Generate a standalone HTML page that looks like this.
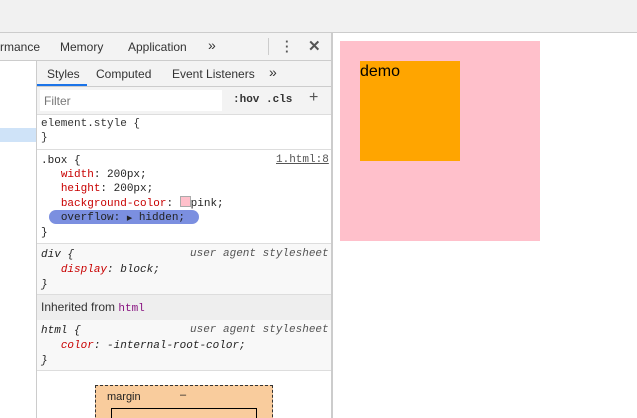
<!DOCTYPE html><html><head><style>
html,body{margin:0;width:637px;height:418px;overflow:hidden}
body{background:#fff;font-family:"Liberation Sans",sans-serif;font-size:12px;position:relative}
.a{position:absolute}
.m{font-family:"Liberation Mono",monospace;font-size:11px}
.ui{font-size:12px;color:#333}
</style></head><body>
<div class="a" style="left:0;top:0;width:637px;height:32px;background:#f1f1f1;border-bottom:1px solid #ccc"></div>
<div class="a" style="left:0;top:33px;width:331px;height:27px;background:#f3f3f3;border-bottom:1px solid #ccc"></div>
<div class="a ui" style="left:0;top:40px">rmance</div>
<div class="a ui" style="left:60px;top:40px">Memory</div>
<div class="a ui" style="left:128px;top:40px">Application</div>
<div class="a ui" style="left:208px;top:37px;font-size:14px">»</div>
<div class="a" style="left:268px;top:38px;width:1px;height:17px;background:#ccc"></div>
<div class="a" style="left:285px;top:39px;font-weight:bold;font-size:13px;color:#555;line-height:5px">·<br>·<br>·</div>
<div class="a" style="left:308px;top:37px;font-size:15px;color:#555;font-weight:bold">✕</div>
<div class="a" style="left:331px;top:33px;width:2px;height:385px;background:#ccc"></div>
<div class="a" style="left:0;top:128px;width:36px;height:14px;background:#cfe3f8"></div>
<div class="a" style="left:36px;top:60px;width:1px;height:358px;background:#ccc"></div>
<div class="a" style="left:37px;top:61px;width:294px;height:25px;background:#f3f3f3;border-bottom:1px solid #ccc"></div>
<div class="a ui" style="left:47px;top:67px">Styles</div>
<div class="a" style="left:37px;top:84px;width:50px;height:2px;background:#1a73e8"></div>
<div class="a ui" style="left:96px;top:67px">Computed</div>
<div class="a ui" style="left:172px;top:67px">Event Listeners</div>
<div class="a ui" style="left:269px;top:64px;font-size:14px">»</div>
<div class="a" style="left:37px;top:87px;width:294px;height:27px;background:#f3f3f3;border-bottom:1px solid #ddd"></div>
<div class="a" style="left:40px;top:90px;width:182px;height:21px;background:#fff"></div>
<div class="a ui" style="left:44px;top:94px;color:#777">Filter</div>
<div class="a m" style="left:233px;top:94px;font-weight:bold;color:#333">:hov .cls</div>
<div class="a" style="left:309px;top:89px;font-size:16px;color:#555">+</div>
<div class="a m" style="left:41px;top:117px;color:#333;line-height:14px">element.style {<br>}</div>
<div class="a" style="left:37px;top:149px;width:294px;height:1px;background:#ddd"></div>
<div class="a" style="left:49px;top:210px;width:150px;height:14px;background:#7b8fe0;border-radius:7px"></div>
<div class="a m" style="left:41px;top:154px;color:#222;line-height:14px;white-space:pre">.box {
   <span style="color:#c80000">width</span>: 200px;
   <span style="color:#c80000">height</span>: 200px;
   <span style="color:#c80000">background-color</span>: <span style="display:inline-block;width:9px;height:9px;background:pink;border:1px solid #aaa;vertical-align:-1px"></span>pink;
   <span style="color:#222">overflow</span>: <span style="font-size:7px">▶</span> hidden;
}</div>
<div class="a m" style="left:276px;top:154px;color:#555;text-decoration:underline">1.html:8</div>
<div class="a" style="left:37px;top:243px;width:294px;height:50px;background:#f8f8f8;border-top:1px solid #ddd"></div>
<div class="a m" style="left:41px;top:248px;color:#222;line-height:15px;white-space:pre;font-style:italic">div {
   <span style="color:#c80000">display</span>: block;
}</div>
<div class="a m" style="left:190px;top:248px;color:#555;font-style:italic">user agent stylesheet</div>
<div class="a" style="left:37px;top:294px;width:294px;height:25px;background:#eee;border-top:1px solid #ddd;border-bottom:1px solid #ddd"></div>
<div class="a ui" style="left:41px;top:300px">Inherited from <span class="m" style="color:#881280">html</span></div>
<div class="a" style="left:37px;top:320px;width:294px;height:50px;background:#f8f8f8"></div>
<div class="a m" style="left:41px;top:324px;color:#222;line-height:15px;white-space:pre;font-style:italic">html {
   <span style="color:#c80000">color</span>: -internal-root-color;
}</div>
<div class="a m" style="left:190px;top:324px;color:#555;font-style:italic">user agent stylesheet</div>
<div class="a" style="left:37px;top:370px;width:294px;height:1px;background:#ddd"></div>
<div class="a" style="left:95px;top:385px;width:176px;height:40px;background:#f9cc9d;border:1px dashed #333"></div>
<div class="a" style="left:107px;top:391px;font-size:11px;color:#222">margin</div>
<div class="a" style="left:180px;top:389px;font-size:11px;color:#222">–</div>
<div class="a" style="left:111px;top:408px;width:144px;height:20px;border:1px solid #000"></div>
<div class="a" style="left:340px;top:41px;width:200px;height:200px;background:pink"></div>
<div class="a" style="left:360px;top:61px;width:100px;height:100px;background:orange"></div>
<div class="a" style="left:360px;top:63px;font-size:16px;color:#000">demo</div>
</body></html>
